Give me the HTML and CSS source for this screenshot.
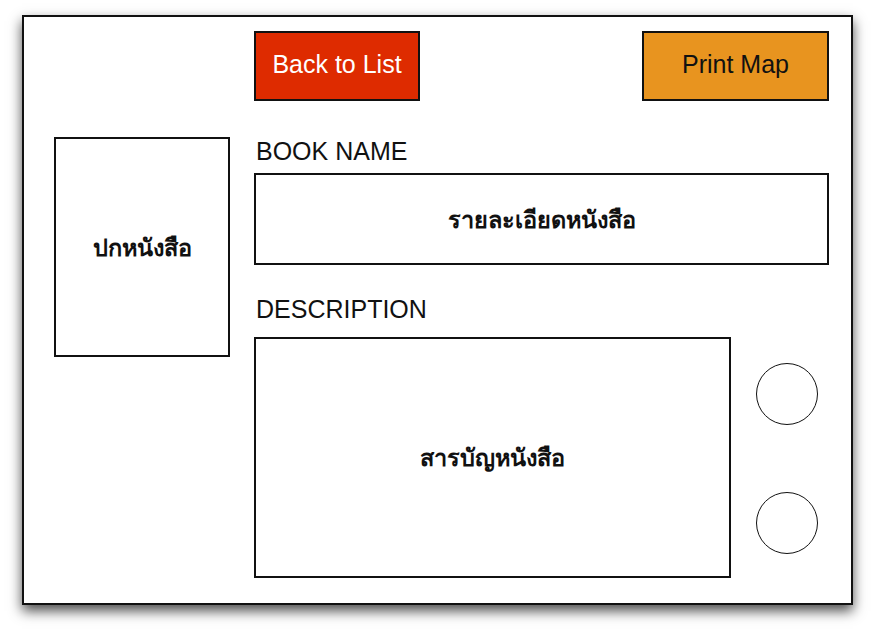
FILE: index.html
```html
<!DOCTYPE html>
<html lang="th">
<head>
    <meta charset="UTF-8">
    <meta name="viewport" content="width=device-width, initial-scale=1.0">
    <title>Book Detail</title>
    <link rel="stylesheet" href="styles.css">
</head>
<body>
    <!-- กรอบหน้าจอ -->
    <div class="frame">
        <!-- ปุ่มด้านบน -->
        <div class="toolbar">
            <button class="btn btn-back">Back to List</button>
            <button class="btn btn-print">Print Map</button>
        </div>

        <!-- ปกหนังสือ -->
        <div class="cover">ปกหนังสือ</div>

        <!-- รายละเอียด -->
        <div class="details">
            <div class="label">BOOK NAME</div>
            <div class="name-box">รายละเอียดหนังสือ</div>

            <div class="label label-desc">DESCRIPTION</div>
            <div class="desc-row">
                <div class="desc-box">สารบัญหนังสือ</div>
                <div class="dots">
                    <span class="dot"></span>
                    <span class="dot"></span>
                </div>
            </div>
        </div>
    </div>
</body>
</html>
```

FILE: styles.css
```css
/* พื้นหลัง */
body {
    margin: 0;
    padding: 0;
    min-height: 635px;
    background: #ffffff;
    font-family: 'Liberation Sans', Arial, sans-serif;
    color: #111111;
}

/* กรอบหลัก */
.frame {
    box-sizing: border-box;
    width: 831px;
    height: 590px;
    margin: 15px 0 30px 22px;
    padding: 14px 0 0 30px;
    border: 2px solid #111111;
    background: #ffffff;
    box-shadow: 0 6px 12px rgba(0, 0, 0, 0.7);
    display: grid;
    grid-template-columns: 176px 575px;
    grid-template-rows: auto auto;
    column-gap: 24px;
    row-gap: 36px;
    align-content: start;
}

/* ปุ่ม */
.toolbar {
    grid-column: 2;
    display: flex;
    justify-content: space-between;
}

.btn {
    box-sizing: border-box;
    height: 70px;
    border: 2px solid #111111;
    border-radius: 0;
    font-family: 'Liberation Sans', Arial, sans-serif;
    font-size: 25px;
    padding: 0 0 4px;
    cursor: pointer;
}

.btn-back {
    width: 166px;
    background: #de2b00;
    color: #ffffff;
}

.btn-print {
    width: 187px;
    background: #e8941f;
    color: #111111;
}

/* ปกหนังสือ */
.cover {
    grid-column: 1;
    grid-row: 2;
    box-sizing: border-box;
    height: 220px;
    border: 2px solid #111111;
    display: flex;
    align-items: center;
    justify-content: center;
}

.cover,
.name-box,
.desc-box {
    font-family: 'Noto Sans', 'DejaVu Sans', sans-serif;
    font-size: 23.5px;
    font-weight: 600;
}

/* รายละเอียด */
.details {
    grid-column: 2;
    grid-row: 2;
    display: flex;
    flex-direction: column;
}

.label {
    font-size: 25px;
    line-height: 28px;
    padding-left: 2px;
}

.name-box {
    box-sizing: border-box;
    height: 92px;
    margin-top: 8px;
    border: 2px solid #111111;
    display: flex;
    align-items: center;
    justify-content: center;
}

.label-desc {
    margin-top: 30px;
}

.desc-row {
    display: flex;
    margin-top: 14px;
}

.desc-box {
    box-sizing: border-box;
    width: 477px;
    height: 241px;
    border: 2px solid #111111;
    display: flex;
    align-items: center;
    justify-content: center;
}

.dots {
    display: flex;
    flex-direction: column;
    gap: 67px;
    padding-top: 26px;
    margin-left: 25px;
}

.dot {
    box-sizing: border-box;
    width: 62px;
    height: 62px;
    border: 1.5px solid #111111;
    border-radius: 50%;
}
```
